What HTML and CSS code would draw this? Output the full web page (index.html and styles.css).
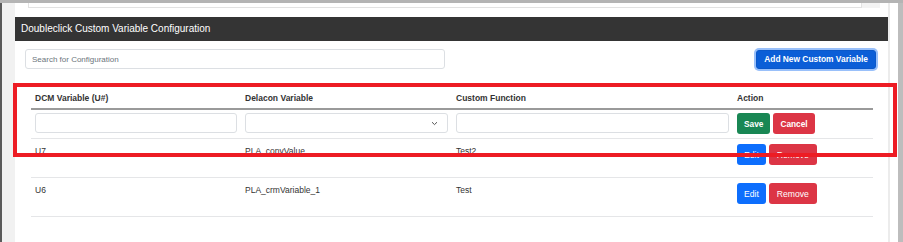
FILE: index.html
```
<!DOCTYPE html>
<html lang="en">
<head>
<meta charset="utf-8">
<title>Doubleclick Custom Variable Configuration</title>
<link rel="stylesheet" href="styles.css">
</head>
<body>
<div class="topbar"></div>
<div class="frame">
  <div class="edge-dark"></div>
  <div class="edge-light"></div>
  <main class="main">
    <div class="prev">
      <div class="prev-card"></div>
      <div class="prev-side"></div>
    </div>
    <section class="card">
      <div class="card-header">Doubleclick Custom Variable Configuration</div>
      <div class="card-body">
        <div class="toolbar">
          <input class="search" type="text" placeholder="Search for Configuration">
          <button class="btn btn-add">Add New Custom Variable</button>
        </div>
        <table class="grid">
          <colgroup>
            <col class="c1"><col class="c2"><col class="c3"><col class="c4">
          </colgroup>
          <thead>
            <tr>
              <th>DCM Variable (U#)</th>
              <th>Delacon Variable</th>
              <th>Custom Function</th>
              <th>Action</th>
            </tr>
          </thead>
          <tbody>
            <tr class="edit-row">
              <td><input class="field" type="text"></td>
              <td>
                <div class="select">
                  <svg class="chev" width="7" height="5" viewBox="0 0 7 5"><path d="M1 1.2 L3.5 3.6 L6 1.2" fill="none" stroke="#555" stroke-width="1"/></svg>
                </div>
              </td>
              <td><input class="field" type="text"></td>
              <td><div class="actions"><button class="btn btn-save">Save</button><button class="btn btn-red btn-bold">Cancel</button></div></td>
            </tr>
            <tr class="data-row">
              <td>U7</td>
              <td>PLA_convValue</td>
              <td>Test2</td>
              <td><div class="actions"><button class="btn btn-edit">Edit</button><button class="btn btn-red btn-wide">Remove</button></div></td>
            </tr>
            <tr class="data-row">
              <td>U6</td>
              <td>PLA_crmVariable_1</td>
              <td>Test</td>
              <td><div class="actions"><button class="btn btn-edit">Edit</button><button class="btn btn-red btn-wide">Remove</button></div></td>
            </tr>
          </tbody>
        </table>
      </div>
    </section>
  </main>
  <div class="gutter"></div>
  <div class="scrollbar"></div>
</div>
<div class="annotation"></div>
</body>
</html>
```
FILE: styles.css
```
* { box-sizing: border-box; }
html, body { margin: 0; padding: 0; }
body {
  width: 903px;
  height: 242px;
  overflow: hidden;
  background: #fff;
  font-family: "Liberation Sans", Arial, sans-serif;
  color: #333;
  position: relative;
}
.topbar { height: 3px; background: #b4b4b4; }
.frame { display: flex; height: 239px; }
.edge-dark { width: 2px; background: #5a5a5a; }
.edge-light { width: 13px; background: #f1f1f1; }
.main { width: 873px; background: #fff; }
.gutter { width: 10px; border-left: 2px solid #ececec; background: #fff; }
.scrollbar { width: 5px; background: #bdbdbd; }

.prev { height: 14px; display: flex; padding-left: 13px; }
.prev-card {
  width: 834px; height: 5px;
  border: 1px solid #e2e2e2; border-top: 0;
}
.prev-side { width: 18px; height: 5px; background: #f3f3f3; }

.card-header {
  height: 24px;
  line-height: 24px;
  background: #343434;
  color: #fff;
  font-size: 10px;
  padding-left: 6px;
}
.card-body { padding-top: 7px; }
.toolbar {
  display: flex;
  justify-content: space-between;
  align-items: center;
  height: 22px;
  padding: 0 10px;
}
.search {
  width: 420px;
  height: 20px;
  border: 1px solid #dcdfe3;
  border-radius: 3px;
  padding: 0 6px;
  font-family: inherit;
  font-size: 8px;
  outline: none;
}
.search::placeholder { color: #6c757d; }

.btn {
  height: 21px;
  border: 0;
  border-radius: 3px;
  color: #fff;
  font-family: inherit;
  font-size: 8.6px;
  padding: 0 7px;
  cursor: pointer;
}
.btn-add {
  height: 19px;
  margin-right: 2px;
  background: #0b5ed7;
  border: 1px solid #0a58ca;
  font-weight: bold;
  font-size: 8.4px;
  padding: 0 7px;
  box-shadow: 0 0 0 2px rgba(70, 140, 245, 0.55);
}
.btn-save { background: #198754; font-weight: bold; font-size: 8.3px; }
.btn-bold { font-weight: bold; font-size: 8.3px; }
.btn-red { background: #dc3545; }
.btn-wide { padding: 0 8px; }
.btn-edit { background: #0d6efd; }
.actions { display: flex; gap: 3px; }

.grid {
  margin: 18px 15px 0 16px;
  width: 842px;
  table-layout: fixed;
  border-collapse: collapse;
  font-size: 8.5px;
}
.c1 { width: 210px; }
.c2 { width: 211px; }
.c3 { width: 281px; }
.c4 { width: 140px; }
.grid th {
  text-align: left;
  font-weight: bold;
  padding: 4px 4px;
  line-height: 12px;
  border-bottom: 2px solid #9a9a9a;
}
.grid td {
  vertical-align: top;
  line-height: 12px;
  border-bottom: 1px solid #e5e6e8;
}
.edit-row td { padding: 3px 4px 4px; }
.data-row td { padding: 5px 4px 12px; }
.data-row td:first-child, .data-row td:nth-child(2), .data-row td:nth-child(3) { padding-top: 6px; padding-bottom: 11px; }
.field {
  display: block;
  width: 100%;
  height: 20px;
  border: 1px solid #dcdfe3;
  border-radius: 3px;
  outline: none;
}
.select {
  height: 20px;
  border: 1px solid #dcdfe3;
  border-radius: 3px;
  display: flex;
  align-items: center;
  justify-content: flex-end;
  padding-right: 9px;
}
.chev { display: block; }

.annotation {
  position: absolute;
  left: 13px;
  top: 83px;
  width: 884px;
  height: 74px;
  border: 4px solid #ed1c24;
}
```
